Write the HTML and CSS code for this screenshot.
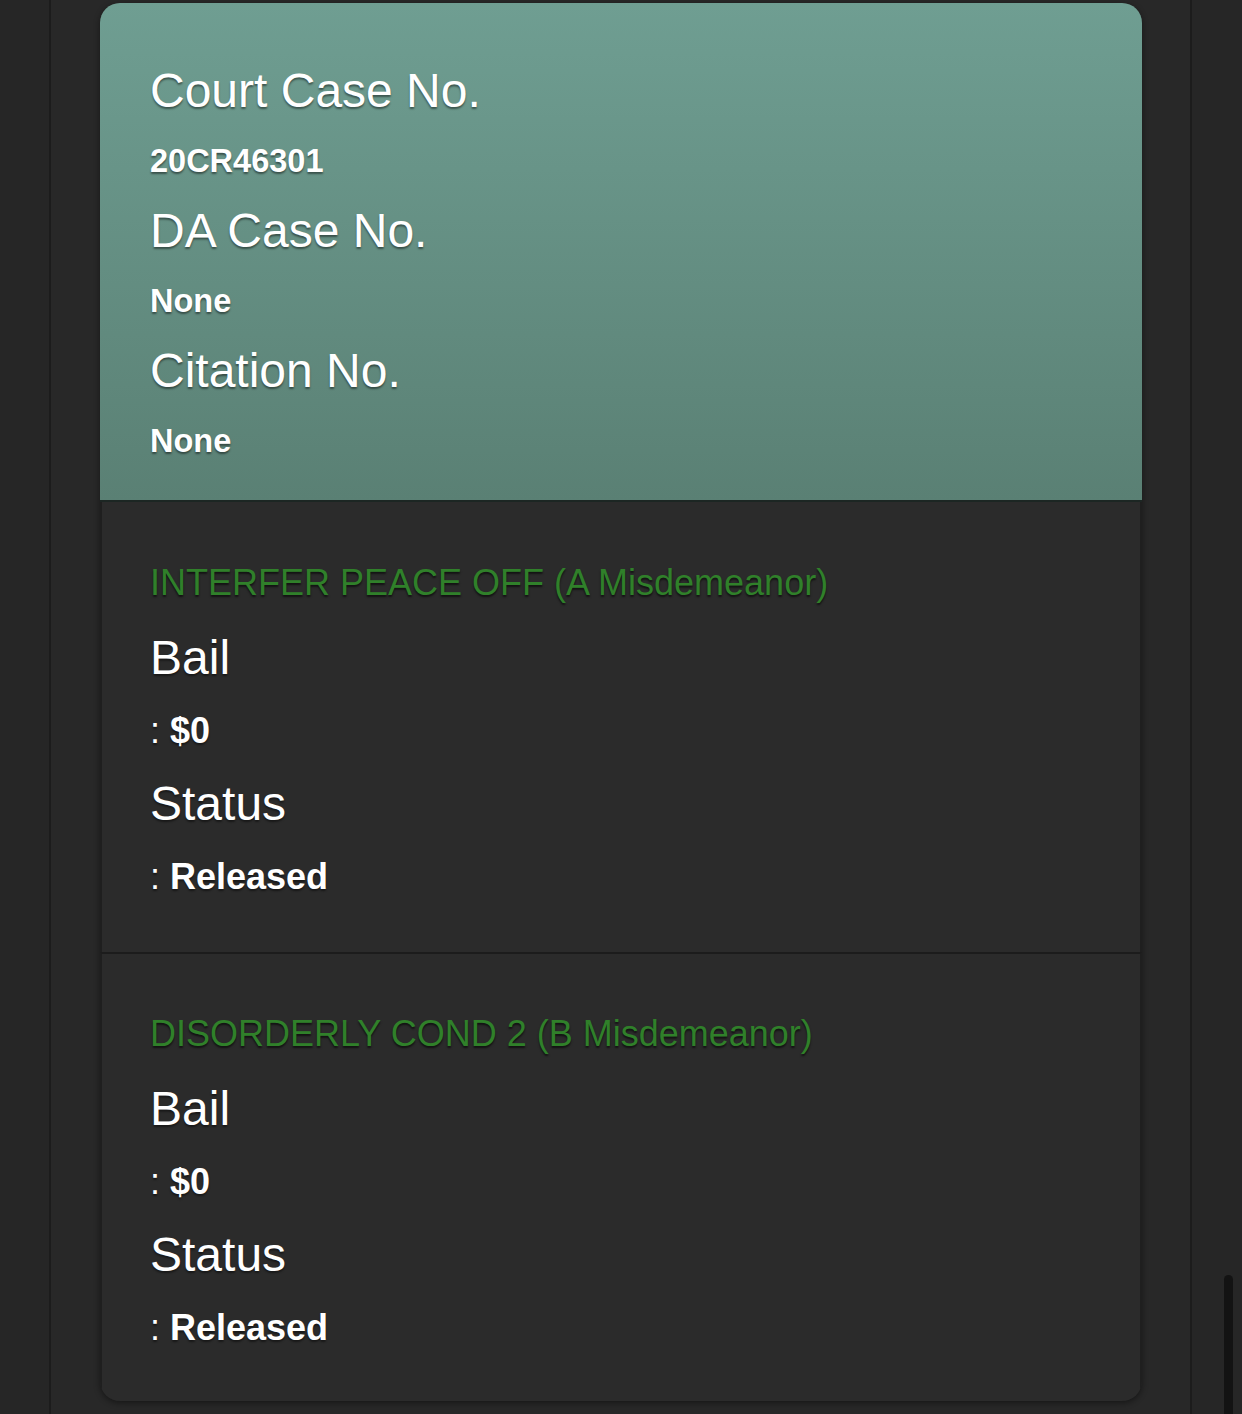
FILE: index.html
```html
<!DOCTYPE html>
<html>
<head>
<meta charset="utf-8">
<link rel="stylesheet" href="styles.css">
</head>
<body>
<div class="page">
  <div class="card">
    <div class="card-head">
      <div class="field">
        <h3 class="label">Court Case No.</h3>
        <p class="value">20CR46301</p>
      </div>
      <div class="field">
        <h3 class="label">DA Case No.</h3>
        <p class="value">None</p>
      </div>
      <div class="field">
        <h3 class="label">Citation No.</h3>
        <p class="value">None</p>
      </div>
    </div>
    <div class="charge">
      <h4 class="charge-title">INTERFER PEACE OFF (A Misdemeanor)</h4>
      <h3 class="label">Bail</h3>
      <p class="value value-lg"><span class="colon">: </span>$0</p>
      <h3 class="label">Status</h3>
      <p class="value value-lg"><span class="colon">: </span>Released</p>
    </div>
    <div class="charge">
      <h4 class="charge-title">DISORDERLY COND 2 (B Misdemeanor)</h4>
      <h3 class="label">Bail</h3>
      <p class="value value-lg"><span class="colon">: </span>$0</p>
      <h3 class="label">Status</h3>
      <p class="value value-lg"><span class="colon">: </span>Released</p>
    </div>
  </div>
</div>
<div class="scrollbar"></div>
</body>
</html>
```
FILE: styles.css
```css
html, body {
  margin: 0;
  padding: 0;
}
body {
  background: #262626;
  font-family: "Liberation Sans", Arial, Helvetica, sans-serif;
  color: #fff;
  height: 1414px;
  overflow: hidden;
  position: relative;
}
.page {
  margin: 0 50px 0 49px;
  border-left: 2px solid #1c1c1c;
  border-right: 2px solid #1c1c1c;
  background: #282828;
  padding: 3px 48px 0 49px;
  height: 1411px;
}
.card {
  border-radius: 20px;
  overflow: hidden;
  background: #2b2b2b;
  box-shadow: 0 2px 6px rgba(0, 0, 0, 0.45);
}
.card-head {
  background: linear-gradient(#6f9e92, #5a8074);
  border-bottom: 2px solid #1c2623;
  padding: 60px 50px 39px;
  display: flex;
  flex-direction: column;
  gap: 22px;
}
.field {
  display: flex;
  flex-direction: column;
  gap: 22px;
}
.label {
  margin: 0;
  font-size: 48px;
  line-height: 56px;
  font-weight: normal;
  text-shadow: 0 2px 2px rgba(0, 0, 0, 0.45);
}
.value {
  margin: 0;
  font-size: 32.5px;
  line-height: 40px;
  font-weight: bold;
  text-shadow: 0 2px 2px rgba(0, 0, 0, 0.45);
}
.value-lg {
  font-size: 36px;
  line-height: 44px;
}
.colon {
  font-weight: normal;
}
.charge {
  padding: 59px 48px 53px;
  border-left: 2px solid #1f1f1f;
  border-right: 2px solid #1f1f1f;
  display: flex;
  flex-direction: column;
  gap: 23px;
}
.charge + .charge {
  border-top: 2px solid #1c1c1c;
  padding-top: 58px;
  padding-bottom: 51px;
}
.charge-title {
  margin: 0 0 2px;
  font-size: 36px;
  line-height: 44px;
  font-weight: normal;
  color: #30802a;
  text-shadow: 0 2px 2px rgba(0, 0, 0, 0.6);
}
.scrollbar {
  position: absolute;
  left: 1224px;
  top: 1275px;
  width: 9px;
  height: 150px;
  border-radius: 5px;
  background: #131313;
}
```
